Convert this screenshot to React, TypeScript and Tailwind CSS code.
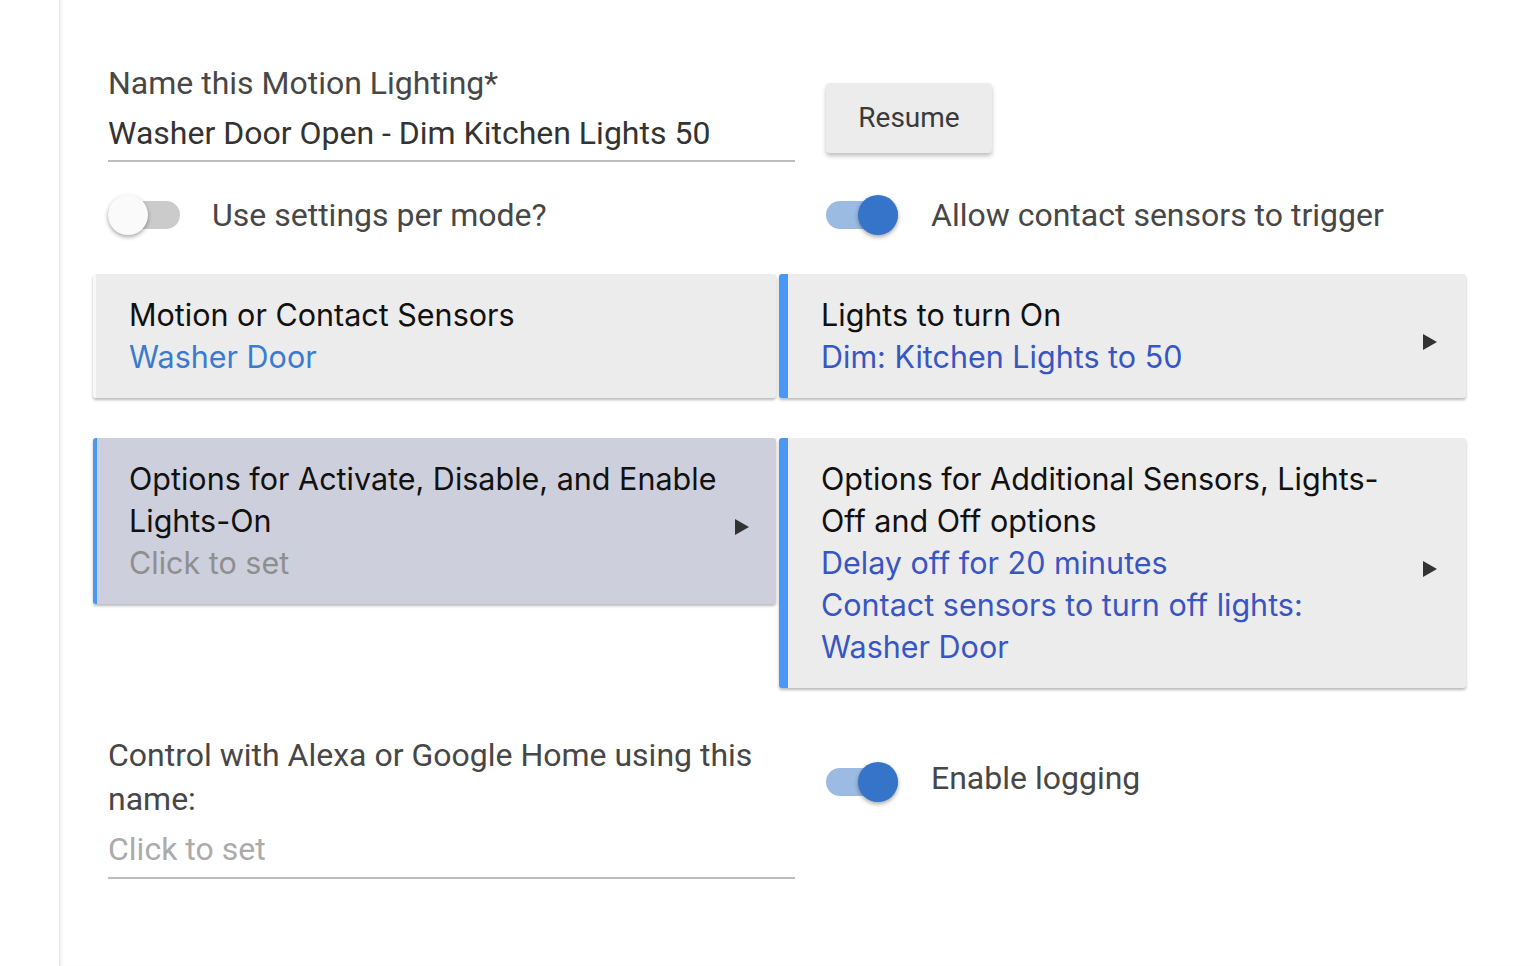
import React from "react";

function Toggle({ on }: { on: boolean }) {
  return (
    <div className="relative w-[72px] h-[40px] shrink-0">
      <div
        className={
          "absolute left-0 right-0 top-[6px] h-[28px] rounded-full " +
          (on ? "bg-[#9cbbe3]" : "bg-[#cbcbcb]")
        }
      />
      <div
        className={
          "absolute top-0 w-[40px] h-[40px] rounded-full shadow-[0_2px_4px_rgba(0,0,0,0.35)] " +
          (on ? "left-[32px] bg-[#3574c8]" : "left-0 bg-[#fafafa]")
        }
      />
    </div>
  );
}

function Arrow() {
  return (
    <svg width="14" height="16" viewBox="0 0 14 16" className="shrink-0 translate-y-[6px]">
      <polygon points="0,0 14,8 0,16" fill="#333" />
    </svg>
  );
}

export default function App() {
  const card = "font-['Inter',sans-serif] text-[30.5px] leading-[42px]";
  return (
    <div className="min-h-[966px] w-[1536px] bg-white flex font-['Roboto',sans-serif]">
      <div className="w-[59px] shrink-0 bg-white" />
      <div className="flex-1 border-l border-[#e4e4e4] shadow-[inset_4px_0_4px_-3px_rgba(0,0,0,0.08)] pl-[33px] pt-[64px]">
        <div className="grid grid-cols-[686px_687px]">
          {/* Row 1 */}
          <div className="pl-[15px]">
            <div className="w-[687px]">
              <div className="text-[32px] leading-[38px] text-[#474747]">Name this Motion Lighting*</div>
              <div className="text-[32px] leading-[38px] text-[#333] mt-[12px]">Washer Door Open - Dim Kitchen Lights 50</div>
              <div className="h-[2px] bg-[#bdbdbd] mt-[8px]" />
            </div>
          </div>
          <div className="pl-[47px] pt-[19px]">
            <div className="w-[166px] h-[70px] rounded-[4px] bg-[#ececec] shadow-[0_3px_4px_rgba(0,0,0,0.25)] flex items-center justify-center text-[28px] text-[#3a3a3a]">
              Resume
            </div>
          </div>

          {/* Row 2 toggles */}
          <div className="pl-[15px] mt-[29px] flex items-center gap-[32px]">
            <Toggle on={false} />
            <span className="text-[32px] text-[#474747]">Use settings per mode?</span>
          </div>
          <div className="pl-[47px] mt-[29px] flex items-center gap-[33px]">
            <Toggle on={true} />
            <span className="text-[32px] text-[#474747]">Allow contact sensors to trigger</span>
          </div>

          {/* Row 3 cards */}
          <div className="mt-[35px] pr-[3px]">
            <div className={"h-[124px] bg-[#ececec] rounded-[3px] border-l-[3px] border-[#f7f7f7] shadow-[0_2px_3px_rgba(0,0,0,0.28)] pl-[33px] py-[20px] " + card}>
              <div className="text-[#111]">Motion or Contact Sensors</div>
              <div className="text-[#3a7bd0]">Washer Door</div>
            </div>
          </div>
          <div className="mt-[35px]">
            <div className={"h-[124px] bg-[#ececec] rounded-[3px] border-l-[9px] border-[#4a97f6] shadow-[0_2px_3px_rgba(0,0,0,0.28)] pl-[33px] pr-[29px] py-[20px] flex items-center " + card}>
              <div className="flex-1">
                <div className="text-[#111]">Lights to turn On</div>
                <div className="text-[#3856c2]">Dim: Kitchen Lights to 50</div>
              </div>
              <Arrow />
            </div>
          </div>

          {/* Row 4 cards */}
          <div className="mt-[40px] pr-[3px] self-start">
            <div className={"bg-[#cdd0dc] rounded-[3px] border-l-[4px] border-[#4a97f6] shadow-[0_2px_3px_rgba(0,0,0,0.28)] pl-[32px] pr-[27px] py-[20px] flex items-center " + card}>
              <div className="flex-1">
                <div className="text-[#111]">Options for Activate, Disable, and Enable Lights-On</div>
                <div className="text-[#8f8f8f]">Click to set</div>
              </div>
              <Arrow />
            </div>
          </div>
          <div className="mt-[40px]">
            <div className={"bg-[#ececec] rounded-[3px] border-l-[9px] border-[#4a97f6] shadow-[0_2px_3px_rgba(0,0,0,0.28)] pl-[33px] pr-[29px] py-[20px] flex items-center " + card}>
              <div className="flex-1 max-w-[578px] mr-auto">
                <div className="text-[#111]">Options for Additional Sensors, Lights-Off and Off options</div>
                <div className="text-[#3856c2]">Delay off for 20 minutes</div>
                <div className="text-[#3856c2]">Contact sensors to turn off lights: Washer Door</div>
              </div>
              <Arrow />
            </div>
          </div>

          {/* Row 5 */}
          <div className="pl-[15px] mt-[45px]">
            <div className="w-[687px]">
              <div className="text-[32px] leading-[44px] text-[#474747] pr-[30px]">Control with Alexa or Google Home using this name:</div>
              <div className="text-[32px] leading-[38px] text-[#ababab] mt-[9px]">Click to set</div>
              <div className="h-[2px] bg-[#bdbdbd] mt-[9px]" />
            </div>
          </div>
          <div className="pl-[47px] mt-[74px] flex items-start gap-[33px]">
            <Toggle on={true} />
            <span className="text-[32px] leading-[38px] text-[#474747] -mt-[3px]">Enable logging</span>
          </div>
        </div>
      </div>
    </div>
  );
}
